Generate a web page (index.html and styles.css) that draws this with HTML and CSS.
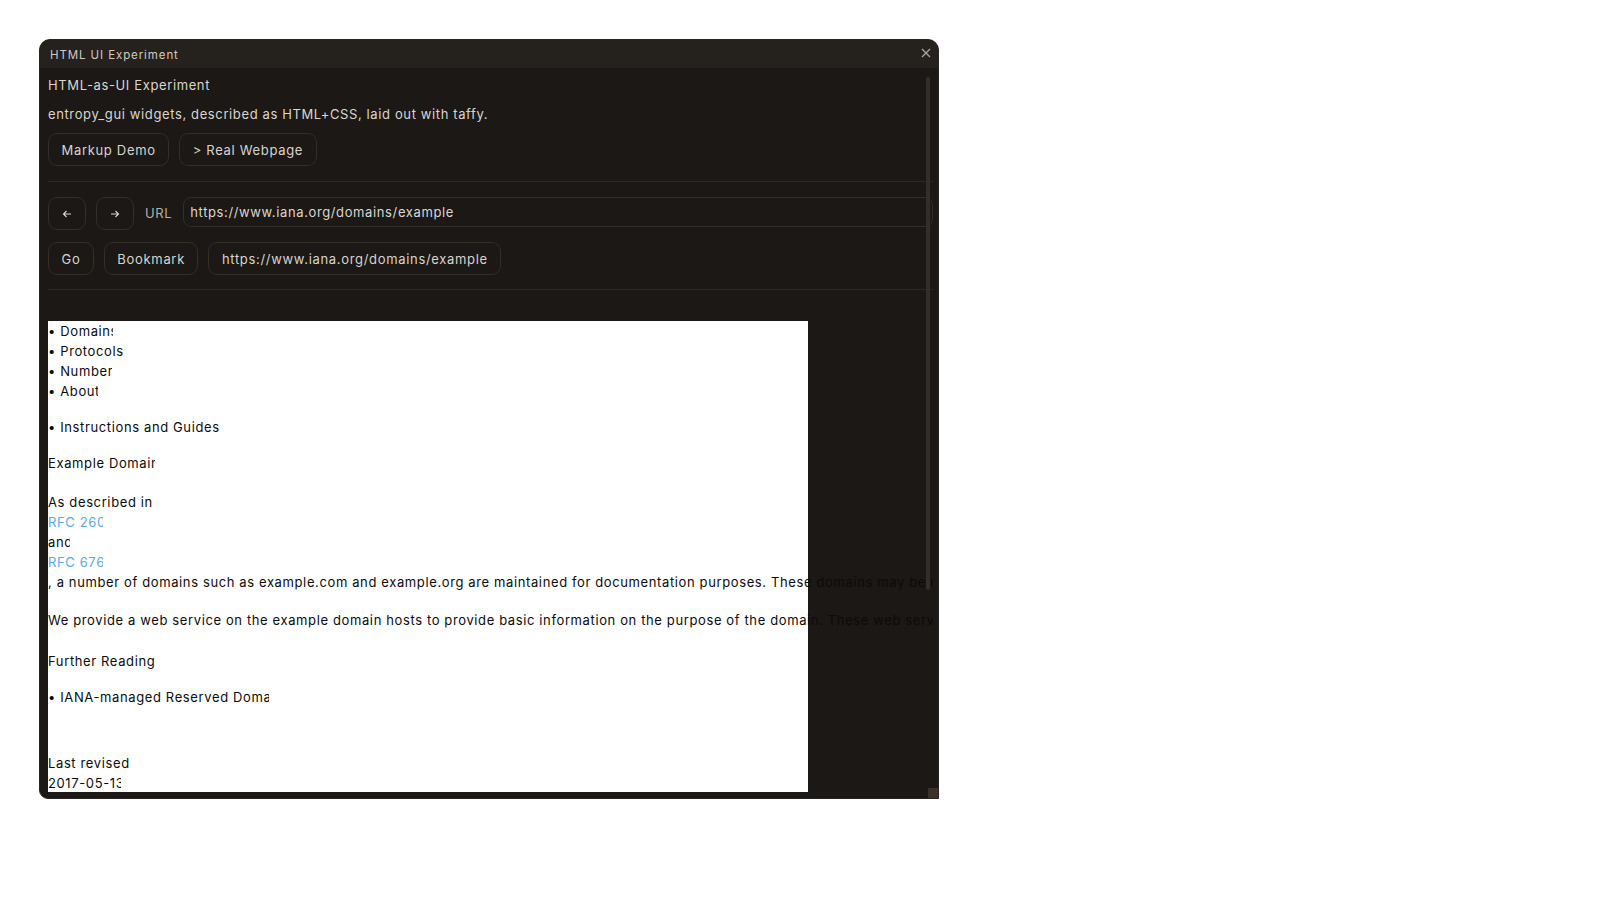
FILE: index.html
```html
<!DOCTYPE html>
<html>
<head>
<meta charset="utf-8">
<title>HTML UI Experiment</title>
<link rel="stylesheet" href="styles.css">
</head>
<body>
<div class="window">
  <div class="titlebar">
    <span class="title">HTML UI Experiment</span>
    <svg class="close" width="10" height="10" viewBox="0 0 10 10"><path d="M1 1L9 9M9 1L1 9" stroke="#aaa59e" stroke-width="1.3" fill="none"/></svg>
  </div>
  <div class="body">
    <div class="scroll">
      <div class="heading">HTML-as-UI Experiment</div>
      <div class="sub">entropy_gui widgets, described as HTML+CSS, laid out with taffy.</div>
      <div class="row first">
        <div class="btn">Markup Demo</div>
        <div class="btn">&gt; Real Webpage</div>
      </div>
      <div class="sep"></div>
      <div class="row nav">
        <div class="btn icon"><svg width="10" height="8" viewBox="0 0 10 8"><path d="M9 4H1.5M4.5 1L1.5 4L4.5 7" stroke="#dcd8d2" stroke-width="1.1" fill="none"/></svg></div>
        <div class="btn icon"><svg width="10" height="8" viewBox="0 0 10 8"><path d="M1 4H8.5M5.5 1L8.5 4L5.5 7" stroke="#dcd8d2" stroke-width="1.1" fill="none"/></svg></div>
        <span class="label">URL</span>
        <div class="urlinput">https://www.iana.org/domains/example</div>
      </div>
      <div class="row second">
        <div class="btn">Go</div>
        <div class="btn">Bookmark</div>
        <div class="btn">https://www.iana.org/domains/example</div>
      </div>
      <div class="sep sep2"></div>
      <div class="page">
        <div class="list">
          <div class="ln clip w-domains">• Domains</div>
          <div class="ln">• Protocols</div>
          <div class="ln clip w-numbers">• Numbers</div>
          <div class="ln clip w-about">• About</div>
        </div>
        <div class="list gap16">
          <div class="ln">• Instructions and Guides</div>
        </div>
        <div class="ln gap16 clip w-example">Example Domain</div>
        <div class="para gap19">
          <div class="ln">As described in</div>
          <div class="ln clip w-rfc link">RFC 2606</div>
          <div class="ln clip w-and">and</div>
          <div class="ln clip w-rfc link">RFC 6761</div>
          <div class="ln">, a number of domains such as example.com and example.org are maintained for documentation purposes. These domains may be used as illustrative examples in documents without prior coordination or asking for permission.</div>
        </div>
        <div class="ln gap18">We provide a web service on the example domain hosts to provide basic information on the purpose of the domain. These web services are provided as best effort, but are not designed to support production workloads.</div>
        <div class="ln gap21">Further Reading</div>
        <div class="list gap16">
          <div class="ln clip w-iana">• IANA-managed Reserved Domains</div>
        </div>
        <div class="footer gap46">
          <div class="ln">Last revised</div>
          <div class="ln clip w-date">2017-05-13</div>
        </div>
      </div>
    </div>
  </div>
  <div class="thumb"></div>
  <div class="grip"></div>
</div>
</body>
</html>
```

FILE: styles.css
```css
* {
  box-sizing: border-box;
}

html,
body {
  margin: 0;
  padding: 0;
  background: #ffffff;
}

body {
  font-family: Inter, "Noto Sans", sans-serif;
  font-size: 13px;
  letter-spacing: 0.62px;
}

.window {
  position: relative;
  margin: 39px 0 0 39px;
  width: 900px;
  height: 760px;
  background: #1b1815;
  border: 1px solid #28241f;
  border-radius: 11px 11px 0 9px;
  display: flex;
  flex-direction: column;
  overflow: hidden;
}

.titlebar {
  height: 28px;
  flex: none;
  display: flex;
  align-items: center;
  justify-content: space-between;
  padding: 0 7px 0 10px;
  background: #25211c;
  color: #cfcac3;
  font-size: 11.5px;
  letter-spacing: 0.9px;
}

.title {
  margin-top: 1px;
}

.close {
  display: block;
  margin-top: -2px;
}

.body {
  flex: 1;
  min-height: 0;
  padding: 9px 5px 6px 8px;
  display: flex;
  flex-direction: column;
}

.scroll {
  flex: 1;
  min-height: 0;
  overflow: hidden;
  color: #dad6d0;
}

.heading,
.sub {
  line-height: 20px;
  white-space: nowrap;
}

.heading {
  margin-top: -2px;
}

.sub {
  margin-top: 9px;
}

.row {
  display: flex;
  gap: 10px;
  align-items: flex-start;
}

.row.first {
  margin-top: 9px;
}

.row.second {
  margin-top: 12px;
}

.btn {
  height: 33px;
  padding: 0 12.5px;
  border: 1px solid #322e28;
  border-radius: 9px;
  display: inline-flex;
  align-items: center;
  justify-content: center;
  color: #d8d4ce;
  white-space: nowrap;
  letter-spacing: 0.68px;
}

.btn.icon {
  width: 38px;
  padding: 0;
}

.btn.icon svg {
  display: block;
  margin-top: 1px;
}

.label {
  line-height: 33px;
  color: #b5b0a8;
  margin: 0 1px;
}

.urlinput {
  flex: 1;
  height: 30px;
  line-height: 28px;
  padding: 0 6px;
  border: 1px solid #312d28;
  border-radius: 8px;
  color: #dad6d0;
  white-space: nowrap;
  overflow: hidden;
}

.sep {
  height: 1px;
  background: #2d2924;
  margin: 15px 0;
}

.sep2 {
  margin: 14px 0 31px;
}

.page {
  width: 761px;
  margin-left: -1px;
  background: #ffffff;
  color: #0c0b0a;
  padding-bottom: 60px;
}

.ln {
  line-height: 20px;
  white-space: nowrap;
  padding-left: 1px;
}

.clip {
  overflow: hidden;
}

.link {
  color: #5ba9e2;
}

.gap16 { margin-top: 16px; }
.gap18 { margin-top: 18px; }
.gap19 { margin-top: 19px; }
.gap21 { margin-top: 21px; }
.gap46 { margin-top: 46px; }

.w-domains { width: 66px; }
.w-numbers { width: 65px; }
.w-about { width: 51px; }
.w-example { width: 108px; }
.w-rfc { width: 56px; }
.w-and { width: 23px; }
.w-iana { width: 222px; }
.w-date { width: 74px; }

.thumb {
  position: absolute;
  top: 37px;
  right: 8px;
  width: 4px;
  height: 513px;
  border-radius: 2px;
  background: #332e27;
}

.grip {
  position: absolute;
  right: 0;
  bottom: 0;
  width: 10px;
  height: 10px;
  background: #3a3129;
}
```
